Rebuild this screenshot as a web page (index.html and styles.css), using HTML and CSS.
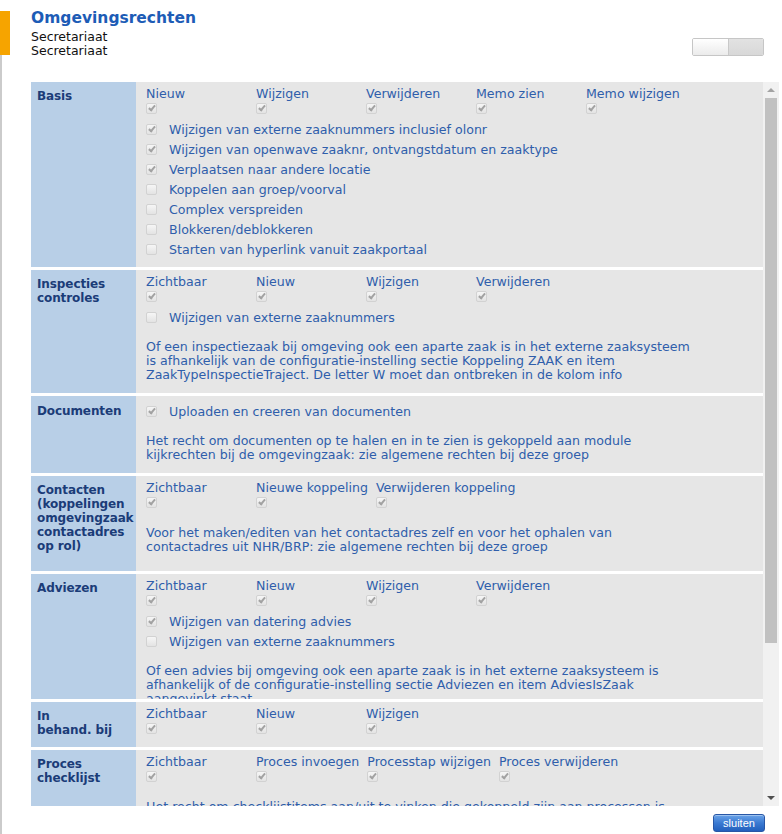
FILE: index.html
```html
<!DOCTYPE html>
<html lang="nl">
<head>
<meta charset="utf-8">
<title>Omgevingsrechten</title>
<link rel="stylesheet" href="styles.css">
</head>
<body>
<div class="page">
  <header class="head">
    <div class="accent"></div>
    <div class="titles">
      <h1 class="title">Omgevingsrechten</h1>
      <div class="sub">Secretariaat</div>
      <div class="sub">Secretariaat</div>
    </div>
    <div class="toggle"><span class="tg-on"></span><span class="tg-off"></span></div>
  </header>

  <main class="body">
    <div class="scroller">
      <div class="sections">

        <section class="sec">
          <div class="lbl">Basis</div>
          <div class="cell">
            <div class="cols">
              <div class="col"><span class="cl">Nieuw</span><span class="cbw"><span class="cb on"></span></span></div>
              <div class="col"><span class="cl">Wijzigen</span><span class="cbw"><span class="cb on"></span></span></div>
              <div class="col"><span class="cl">Verwijderen</span><span class="cbw"><span class="cb on"></span></span></div>
              <div class="col"><span class="cl">Memo zien</span><span class="cbw"><span class="cb on"></span></span></div>
              <div class="col"><span class="cl">Memo wijzigen</span><span class="cbw"><span class="cb on"></span></span></div>
            </div>
            <div class="opt"><span class="cb on"></span><span>Wijzigen van externe zaaknummers inclusief olonr</span></div>
            <div class="opt"><span class="cb on"></span><span>Wijzigen van openwave zaaknr, ontvangstdatum en zaaktype</span></div>
            <div class="opt"><span class="cb on"></span><span>Verplaatsen naar andere locatie</span></div>
            <div class="opt"><span class="cb"></span><span>Koppelen aan groep/voorval</span></div>
            <div class="opt"><span class="cb"></span><span>Complex verspreiden</span></div>
            <div class="opt"><span class="cb"></span><span>Blokkeren/deblokkeren</span></div>
            <div class="opt"><span class="cb"></span><span>Starten van hyperlink vanuit zaakportaal</span></div>
          </div>
        </section>

        <section class="sec">
          <div class="lbl">Inspecties<br>controles</div>
          <div class="cell">
            <div class="cols">
              <div class="col"><span class="cl">Zichtbaar</span><span class="cbw"><span class="cb on"></span></span></div>
              <div class="col"><span class="cl">Nieuw</span><span class="cbw"><span class="cb on"></span></span></div>
              <div class="col"><span class="cl">Wijzigen</span><span class="cbw"><span class="cb on"></span></span></div>
              <div class="col"><span class="cl">Verwijderen</span><span class="cbw"><span class="cb on"></span></span></div>
            </div>
            <div class="opt"><span class="cb"></span><span>Wijzigen van externe zaaknummers</span></div>
            <p class="note">Of een inspectiezaak bij omgeving ook een aparte zaak is in het externe zaaksysteem<br>is afhankelijk van de configuratie-instelling sectie Koppeling ZAAK en item<br>ZaakTypeInspectieTraject. De letter W moet dan ontbreken in de kolom info</p>
          </div>
        </section>

        <section class="sec">
          <div class="lbl lbl-doc">Documenten</div>
          <div class="cell">
            <div class="opt"><span class="cb on"></span><span>Uploaden en creeren van documenten</span></div>
            <p class="note">Het recht om documenten op te halen en in te zien is gekoppeld aan module<br>kijkrechten bij de omgevingzaak: zie algemene rechten bij deze groep</p>
          </div>
        </section>

        <section class="sec">
          <div class="lbl lbl-tall">Contacten<br>(koppelingen<br>omgevingzaak<br>contactadres<br>op rol)</div>
          <div class="cell">
            <div class="cols">
              <div class="col"><span class="cl">Zichtbaar</span><span class="cbw"><span class="cb on"></span></span></div>
              <div class="col"><span class="cl">Nieuwe koppeling</span><span class="cbw"><span class="cb on"></span></span></div>
              <div class="col"><span class="cl">Verwijderen koppeling</span><span class="cbw"><span class="cb on"></span></span></div>
            </div>
            <p class="note">Voor het maken/editen van het contactadres zelf en voor het ophalen van<br>contactadres uit NHR/BRP: zie algemene rechten bij deze groep</p>
          </div>
        </section>

        <section class="sec sec-clip">
          <div class="lbl">Adviezen</div>
          <div class="cell">
            <div class="cols">
              <div class="col"><span class="cl">Zichtbaar</span><span class="cbw"><span class="cb on"></span></span></div>
              <div class="col"><span class="cl">Nieuw</span><span class="cbw"><span class="cb on"></span></span></div>
              <div class="col"><span class="cl">Wijzigen</span><span class="cbw"><span class="cb on"></span></span></div>
              <div class="col"><span class="cl">Verwijderen</span><span class="cbw"><span class="cb on"></span></span></div>
            </div>
            <div class="opt"><span class="cb on"></span><span>Wijzigen van datering advies</span></div>
            <div class="opt"><span class="cb"></span><span>Wijzigen van externe zaaknummers</span></div>
            <p class="note">Of een advies bij omgeving ook een aparte zaak is in het externe zaaksysteem is<br>afhankelijk of de configuratie-instelling sectie Adviezen en item AdviesIsZaak<br>aangevinkt staat</p>
          </div>
        </section>

        <section class="sec">
          <div class="lbl">In<br>behand. bij</div>
          <div class="cell">
            <div class="cols">
              <div class="col"><span class="cl">Zichtbaar</span><span class="cbw"><span class="cb on"></span></span></div>
              <div class="col"><span class="cl">Nieuw</span><span class="cbw"><span class="cb on"></span></span></div>
              <div class="col"><span class="cl">Wijzigen</span><span class="cbw"><span class="cb on"></span></span></div>
            </div>
          </div>
        </section>

        <section class="sec">
          <div class="lbl">Proces<br>checklijst</div>
          <div class="cell">
            <div class="cols">
              <div class="col"><span class="cl">Zichtbaar</span><span class="cbw"><span class="cb on"></span></span></div>
              <div class="col"><span class="cl">Proces invoegen</span><span class="cbw"><span class="cb on"></span></span></div>
              <div class="col"><span class="cl">Processtap wijzigen</span><span class="cbw"><span class="cb on"></span></span></div>
              <div class="col"><span class="cl">Proces verwijderen</span><span class="cbw"><span class="cb on"></span></span></div>
            </div>
            <p class="note">Het recht om checklijstitems aan/uit te vinken die gekoppeld zijn aan processen is<br>afhankelijk van de rechten bij de processen zelf</p>
          </div>
        </section>

      </div>
      <div class="sbar">
        <div class="sb-btn"><span class="arr-up"></span></div>
        <div class="sb-track"><div class="sb-thumb"></div></div>
        <div class="sb-btn"><span class="arr-down"></span></div>
      </div>
    </div>
    <div class="foot"><button class="btn" type="button">sluiten</button></div>
  </main>
</div>
</body>
</html>
```

FILE: styles.css
```css
html, body {
  margin: 0;
  padding: 0;
  background: #ffffff;
}

body {
  font-family: "DejaVu Sans", Verdana, sans-serif;
  font-size: 12px;
  color: #2f5eab;
}

.page {
  width: 782px;
  height: 834px;
  display: flex;
  flex-direction: column;
  overflow: hidden;
}

/* header */
.head {
  height: 55px;
  flex: none;
  display: flex;
  align-items: flex-start;
}

.accent {
  width: 10px;
  height: 44px;
  margin-top: 11px;
  background: #f6a400;
  flex: none;
}

.titles {
  margin-left: 21px;
  padding-top: 8px;
}

.title {
  margin: 0 0 2px 0;
  font-size: 15.5px;
  line-height: 20px;
  font-weight: bold;
  color: #1d5cb6;
}

.sub {
  font-size: 12.5px;
  line-height: 13.5px;
  color: #111111;
}

.toggle {
  margin-left: auto;
  margin-top: 38px;
  margin-right: 18px;
  width: 72px;
  height: 18px;
  box-sizing: border-box;
  border: 1px solid #c6c6c6;
  border-radius: 2px;
  display: flex;
  overflow: hidden;
}

.tg-on {
  flex: 1;
  background: linear-gradient(#ffffff, #ebebeb);
  border-right: 1px solid #c9c9c9;
}

.tg-off {
  flex: 1;
  background: linear-gradient(#e2e2e2, #d8d8d8);
}

/* body */
.body {
  flex: 1;
  display: flex;
  flex-direction: column;
  border-left: 2px solid #cbcbcb;
  padding: 27px 3px 0 29px;
}

.scroller {
  height: 724px;
  display: flex;
  flex: none;
}

.sections {
  flex: 1;
  overflow: hidden;
  background: #ffffff;
}

.sec {
  display: grid;
  grid-template-columns: 105px 1fr;
  margin-bottom: 3px;
}

.sec-clip {
  height: 125px;
  overflow: hidden;
}

.lbl {
  background: #b8cfe7;
  padding: 7px 0 6px 6px;
  font-weight: bold;
  font-size: 12px;
  line-height: 14px;
  letter-spacing: -0.1px;
  color: #1b3c78;
  white-space: nowrap;
  overflow: hidden;
}

.lbl-doc {
  padding-top: 8px;
}

.lbl-tall {
  padding-bottom: 18px;
}

.cell {
  background: #e6e6e6;
  padding: 5px 10px 8px 10px;
  display: flex;
  flex-direction: column;
  white-space: nowrap;
  font-size: 12.6px;
}

.cols {
  display: flex;
  margin-bottom: 4px;
}

.col {
  min-width: 102px;
  padding-right: 8px;
  display: flex;
  flex-direction: column;
}

.cl {
  line-height: 14px;
}

.cbw {
  height: 14px;
  display: flex;
  align-items: center;
}

.opt {
  height: 20px;
  display: flex;
  align-items: center;
}

.opt .cb {
  margin-right: 12px;
}

.note {
  margin: 13px 0 3px 0;
  line-height: 14px;
}

/* disabled checkbox */
.cb {
  position: relative;
  display: inline-block;
  flex: none;
  width: 11px;
  height: 11px;
  box-sizing: border-box;
  border: 1px solid #d2d2d2;
  border-radius: 2px;
  background: linear-gradient(#f6f6f6, #e3e3e3);
}

.cb.on::after {
  content: "";
  position: absolute;
  left: 3px;
  top: 0px;
  width: 2px;
  height: 5px;
  border: solid #a2a2a2;
  border-width: 0 2px 2px 0;
  transform: rotate(40deg);
}

/* scrollbar */
.sbar {
  width: 16px;
  flex: none;
  display: flex;
  flex-direction: column;
  background: #f1f1f1;
}

.sb-btn {
  height: 16px;
  display: flex;
  align-items: center;
  justify-content: center;
  flex: none;
}

.sb-track {
  flex: 1;
  padding: 0 2px;
}

.sb-thumb {
  height: 545px;
  background: #c1c1c1;
}

.arr-up {
  width: 0;
  height: 0;
  border-left: 4px solid transparent;
  border-right: 4px solid transparent;
  border-bottom: 4px solid #a3a3a3;
}

.arr-down {
  width: 0;
  height: 0;
  border-left: 4px solid transparent;
  border-right: 4px solid transparent;
  border-top: 4px solid #505050;
}

/* footer */
.foot {
  display: flex;
  justify-content: flex-end;
  padding: 8px 14px 0 0;
}

.btn {
  width: 52px;
  height: 18px;
  padding: 0;
  border: 1px solid #2857a6;
  border-radius: 3px;
  background: linear-gradient(#6aa3e8, #3b7ad2 50%, #2260bd);
  color: #ffffff;
  font-family: "Liberation Sans", Arial, sans-serif;
  font-size: 11px;
  line-height: 16px;
  box-shadow: inset 0 1px 0 rgba(255, 255, 255, 0.35);
}
```
